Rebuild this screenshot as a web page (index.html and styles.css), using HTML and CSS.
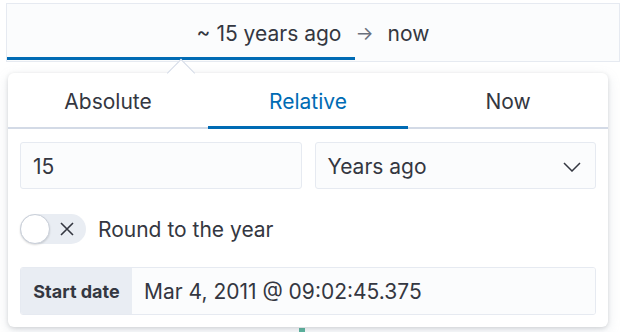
FILE: index.html
```html
<!DOCTYPE html>
<html lang="en">
<head>
    <meta charset="UTF-8">
    <title>Date picker</title>
    <link rel="stylesheet" href="styles.css">
</head>
<body>
    <div class="page">
        <div class="bar">
            <span class="bar-start">~ 15 years ago</span>
            <span class="bar-arrow">&rarr;</span>
            <span class="bar-end">now</span>
            <div class="bar-progress"></div>
        </div>

        <div class="popover">
            <div class="popover-arrow"></div>
            <div class="tabs">
                <div class="tab">Absolute</div>
                <div class="tab active">Relative</div>
                <div class="tab">Now</div>
            </div>
            <div class="popover-body">
                <div class="row">
                    <div class="field">15</div>
                    <div class="field select">
                        <span>Years ago</span>
                        <svg width="18" height="10" viewBox="0 0 18 10"><path d="M1 1l8 8 8-8" fill="none" stroke="#343741" stroke-width="1.5"/></svg>
                    </div>
                </div>
                <div class="switch-row">
                    <div class="switch">
                        <div class="switch-thumb"></div>
                        <svg class="switch-x" width="14" height="14" viewBox="0 0 14 14"><path d="M1 1l12 12M13 1L1 13" stroke="#343741" stroke-width="1.6"/></svg>
                    </div>
                    <span class="switch-label">Round to the year</span>
                </div>
                <div class="date-group">
                    <div class="date-prepend">Start date</div>
                    <div class="date-value">Mar 4, 2011 @ 09:02:45.375</div>
                </div>
            </div>
        </div>
        <div class="behind-mark"></div>
    </div>
</body>
</html>
```

FILE: styles.css
```css
* {
    margin: 0;
    padding: 0;
    box-sizing: border-box;
}
html, body {
    width: 100%;
    height: 100%;
    overflow: hidden;
}
body {
    font-family: Inter, "Noto Sans", sans-serif;
    color: #343741;
    background-color: #fff;
}
.page {
    position: relative;
    height: 100%;
    padding-top: 3px;
}
.bar {
    position: relative;
    margin: 0 7px 0 6px;
    height: 59px;
    border: 1px solid #e6eaf1;
    background-color: #fbfcfd;
    display: flex;
    align-items: center;
    justify-content: center;
    font-size: 21px;
    padding-top: 2px;
}
.bar-arrow {
    color: #69707d;
    margin: 0 14px;
    font-size: 19px;
}
.bar-progress {
    position: absolute;
    left: 0;
    bottom: 1px;
    width: 348px;
    height: 3px;
    background-color: #006bb4;
}
.popover {
    position: relative;
    margin: 11px 19px 0 8px;
    width: 600px;
    background-color: #fff;
    border-radius: 6px;
    box-shadow: 0 1px 4px rgba(0, 0, 0, 0.12), 0 4px 12px rgba(152, 162, 179, 0.25);
    z-index: 2;
}
.popover-arrow {
    position: absolute;
    top: -10px;
    left: 163px;
    width: 20px;
    height: 20px;
    background-color: #fff;
    border-top: 1px solid #d3dae6;
    border-left: 1px solid #d3dae6;
    transform: rotate(45deg);
}
.tabs {
    position: relative;
    display: grid;
    grid-template-columns: 1fr 1fr 1fr;
    height: 56px;
    border-bottom: 2px solid #d3dae6;
}
.tab {
    display: flex;
    align-items: center;
    justify-content: center;
    font-size: 21px;
    padding-top: 3px;
}
.tab.active {
    color: #006bb4;
    box-shadow: inset 0 -3px 0 #006bb4;
    margin-bottom: -2px;
    padding-bottom: 2px;
}
.popover-body {
    padding: 13px 12px 12px;
}
.row {
    display: grid;
    grid-template-columns: 1fr 1fr;
    gap: 13px;
}
.field {
    height: 47px;
    background-color: #fbfcfd;
    border: 1px solid #e6eaf1;
    border-radius: 3px;
    display: flex;
    align-items: center;
    padding: 2px 12px 0;
    font-size: 21px;
}
.select {
    justify-content: space-between;
    padding-right: 14px;
}
.switch-row {
    display: flex;
    align-items: center;
    margin-top: 25px;
    gap: 12px;
}
.switch {
    position: relative;
    width: 66px;
    height: 30px;
    border-radius: 15px;
    background-color: #e9edf3;
}
.switch-thumb {
    position: absolute;
    left: 0;
    top: 0;
    width: 30px;
    height: 30px;
    border-radius: 50%;
    background-color: #fff;
    border: 1px solid #c9cfd9;
    box-shadow: 0 1px 2px rgba(0, 0, 0, 0.15);
}
.switch-x {
    position: absolute;
    left: 40px;
    top: 8px;
}
.switch-label {
    font-size: 21px;
}
.date-group {
    margin-top: 23px;
    display: flex;
    height: 48px;
    border: 1px solid #e6eaf1;
    border-radius: 3px;
    overflow: hidden;
}
.date-prepend {
    width: 111px;
    background-color: #e9edf3;
    font-weight: 700;
    font-size: 18px;
    display: flex;
    align-items: center;
    justify-content: center;
    padding-top: 1px;
}
.date-value {
    flex: 1;
    background-color: #fbfcfd;
    display: flex;
    align-items: center;
    padding: 1px 0 0 12px;
    font-size: 21px;
}
.behind-mark {
    position: absolute;
    left: 299px;
    top: 328px;
    width: 6px;
    height: 4px;
    background-color: #54b399;
}
```
